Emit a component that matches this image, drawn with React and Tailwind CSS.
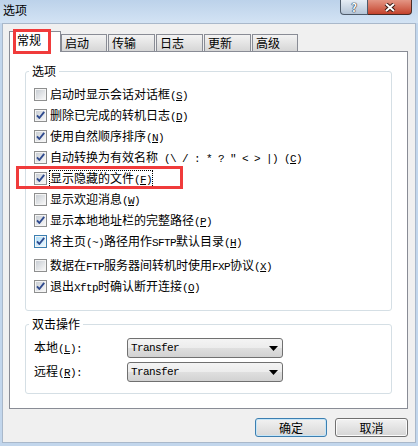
import React from 'react';

// ── fonts ──────────────────────────────────────────────────────────
const cjk = "font-['Noto_Sans_CJK_SC','Microsoft_YaHei',sans-serif]";
const mono = "font-['Liberation_Mono',monospace] text-[11px] tracking-[-0.6px] whitespace-pre";

// split a label into CJK and half-width runs (half-width runs go mono, like SimSun)
function Txt({ s }) {
  return s.split(/([\x20-\x7e]+)/).filter(Boolean).map((p, i) =>
    /^[\x20-\x7e]+$/.test(p)
      ? <span key={i} className={mono}>{p}</span>
      : <span key={i}>{p}</span>
  );
}

function Key({ k, tail = '' }) {
  return <span className={mono}>(<u>{k}</u>){tail}</span>;
}

// ── Checkbox (Win7 look) ───────────────────────────────────────────
function Check({ on, hot }) {
  return (
    <svg width="13" height="13" viewBox="0 0 13 13" className="block shrink-0">
      <defs>
        <linearGradient id="cbfill" x1="0" y1="0" x2="1" y2="1">
          <stop offset="0" stopColor="#c9ced4" />
          <stop offset="1" stopColor="#f7f7f7" />
        </linearGradient>
        <linearGradient id="cbhot" x1="0" y1="0" x2="1" y2="1">
          <stop offset="0" stopColor="#b1dffa" />
          <stop offset="1" stopColor="#e9f7fe" />
        </linearGradient>
      </defs>
      <rect x="0.5" y="0.5" width="12" height="12" fill="#f4f4f4" stroke={hot ? '#3c7fb1' : '#8e8f8f'} />
      <rect x="2" y="2" width="9" height="9" fill={hot ? 'url(#cbhot)' : 'url(#cbfill)'} />
      {on && <path d="M3 6.3 L5.3 9 L10.2 2.8" fill="none" stroke="#2f4a8e" strokeWidth="1.9" strokeLinejoin="round" />}
    </svg>
  );
}

// ── Tabs ───────────────────────────────────────────────────────────
function Tab({ label, w }) {
  return (
    <div className={`h-[17px] border border-b-0 border-[#898c95] bg-linear-to-b from-[#f3f3f3] to-[#d6d6d6] pl-[3px] pt-px leading-[14px] text-[12px] ${w}`}>
      {label}
    </div>
  );
}

// ── Group box ──────────────────────────────────────────────────────
function Group({ title, className = '', children }) {
  return (
    <fieldset className={`mx-[15px] rounded-[3px] border border-[#d5dfe5] px-[3px] ${className}`}>
      <legend className="px-[3px] text-[12px] leading-[14px]">{title}</legend>
      {children}
    </fieldset>
  );
}

function Row({ label, k, on, hot, focus, red, className = '' }) {
  return (
    <div className={`relative flex h-[21px] items-center gap-[3px] ${className}`}>
      <Check on={on} hot={hot} />
      <span className={`text-[12px] leading-[14px] ${focus ? 'outline-1 outline-dotted outline-black' : ''}`}>
        <Txt s={label} /><Key k={k} />
      </span>
      {red && <div className="absolute left-[-18px] top-[-2px] h-[23px] w-[167px] border-[3px] border-[#f03b3b]" />}
    </div>
  );
}

function Combo({ value }) {
  return (
    <div className="flex h-[20px] w-[156px] items-center justify-between rounded-[3px] border border-[#707070] bg-[linear-gradient(#f4f4f4_0%,#ececec_50%,#dfdfdf_50%,#d2d2d2_100%)] pl-[3px] pr-[4px]">
      <span className={mono}>{value}</span>
      <svg width="9" height="5" viewBox="0 0 9 5"><path d="M0 0 H9 L4.5 5 Z" fill="#000" /></svg>
    </div>
  );
}

const rows = [
  { label: '启动时显示会话对话框', k: 'S', on: false },
  { label: '删除已完成的转机日志', k: 'D', on: true },
  { label: '使用自然顺序排序', k: 'N', on: true },
  { label: '自动转换为有效名称 (\\ / : * ? " < > |) ', k: 'C', on: true },
  { label: '显示隐藏的文件', k: 'F', on: true, focus: true, red: true },
  { label: '显示欢迎消息', k: 'W', on: false },
  { label: '显示本地地址栏的完整路径', k: 'P', on: true },
  { label: '将主页(~)路径用作SFTP默认目录', k: 'H', on: true, hot: true },
  { label: '数据在FTP服务器间转机时使用FXP协议', k: 'X', on: false, className: 'mt-[3px]' },
  { label: '退出Xftp时确认断开连接', k: 'O', on: true },
];

export default function App() {
  return (
    <div className={`h-[446px] w-[418px] overflow-hidden bg-[#c2d6ec] text-black ${cjk}`}>
      {/* title bar */}
      <div className="flex h-[23px] items-start justify-between bg-linear-to-b from-[#bcd2ea] to-[#d3e3f4]">
        <span className="pl-[3px] pt-[3px] text-[12px] leading-[14px]">选项</span>
        <div className="mr-[6px] flex h-[15px]">
          <div className="flex w-[28px] items-center justify-center rounded-bl-[4px] border border-t-0 border-[#4d5a6a] bg-linear-to-b from-[#e6edf5] to-[#b4c4d6]">
            <span className="text-[11px] font-bold leading-none text-white [text-shadow:0_0_1px_#1d2a3a,0_0_1px_#1d2a3a,0_0_1px_#1d2a3a]">?</span>
          </div>
          <div className="flex w-[44px] items-center justify-center rounded-br-[4px] border border-l-0 border-t-0 border-[#4a2a24] bg-linear-to-b from-[#e39584] to-[#c3412b]">
            <svg width="12" height="9" viewBox="0 0 12 9">
              <path d="M2 1 L10 8 M10 1 L2 8" stroke="#3b1a14" strokeWidth="4" />
              <path d="M2 1 L10 8 M10 1 L2 8" stroke="#fff" strokeWidth="2" />
            </svg>
          </div>
        </div>
      </div>

      {/* dialog body */}
      <div className="ml-[2px] h-[420px] w-[414px] border border-[#a9b8ca] bg-[#f0f0f0] pl-[6px] pr-[7px] pt-[7px]">
        {/* tab strip */}
        <div className="flex h-[20px] items-end">
          <div className="relative z-10 -mb-px h-[21px] w-[52px] border border-b-0 border-[#898c95] bg-white pl-[7px] pt-px text-[12px] leading-[14px]">
            常规
            <div className="absolute left-[3px] top-[-3px] h-[25px] w-[38px] border-[3px] border-[#f03b3b]" />
          </div>
          <div className="flex gap-px">
            <Tab label="启动" w="w-[46px]" />
            <Tab label="传输" w="w-[47px]" />
            <Tab label="日志" w="w-[47px]" />
            <Tab label="更新" w="w-[47px]" />
            <Tab label="高级" w="w-[46px]" />
          </div>
        </div>

        {/* tab page */}
        <div className="h-[358px] border border-[#898c95] bg-white pt-[12px]">
          <Group title="选项" className="pb-[13px]">
            <div className="pl-[5px] pt-[6px]">
              {rows.map(r => <Row key={r.k} {...r} />)}
            </div>
          </Group>

          <Group title="双击操作" className="mt-[6px] pb-[11px]">
            <div className="flex flex-col gap-[4px] pl-[5px] pt-[7px]">
              <div className="flex items-center">
                <span className="w-[93px] text-[12px] leading-[14px]">本地<Key k="L" tail=":" /></span>
                <Combo value="Transfer" />
              </div>
              <div className="flex items-center">
                <span className="w-[93px] text-[12px] leading-[14px]">远程<Key k="R" tail=":" /></span>
                <Combo value="Transfer" />
              </div>
            </div>
          </Group>
        </div>

        {/* buttons */}
        <div className="mt-[9px] flex justify-end gap-[8px]">
          <button className="h-[19px] w-[72px] rounded-[3px] border border-[#3c7fb1] bg-linear-to-b from-[#f2f2f2] to-[#d8d8d8] text-[12px] leading-[14px] shadow-[inset_0_0_0_1px_#c6e6f8]">
            确定
          </button>
          <button className="h-[19px] w-[73px] rounded-[3px] border border-[#707070] bg-linear-to-b from-[#f2f2f2] to-[#d5d5d5] text-[12px] leading-[14px] shadow-[inset_0_0_0_1px_#fbfbfb]">
            取消
          </button>
        </div>
      </div>
    </div>
  );
}
